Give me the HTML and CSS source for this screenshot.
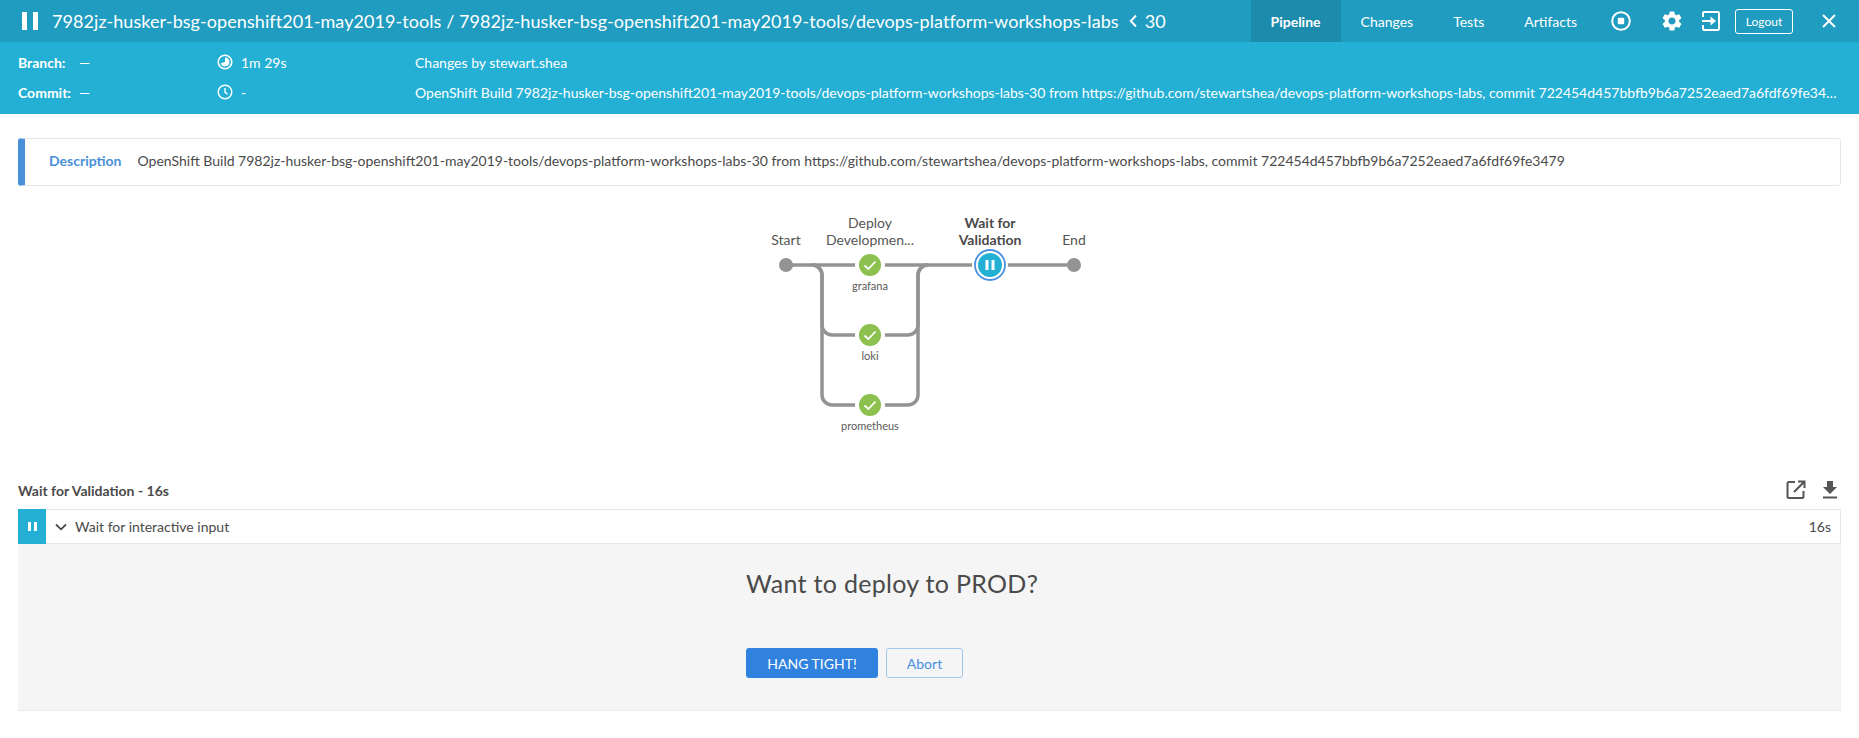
FILE: index.html
```html
<!DOCTYPE html>
<html lang="en">
<head>
  <meta charset="UTF-8">
  <meta name="viewport" content="width=device-width, initial-scale=1">
  <title>Pipeline run</title>
  <link rel="stylesheet" href="styles.css">
</head>
<body>
  <header class="run-header">
    <div class="top-bar">
      <svg class="run-status" width="16" height="18" viewBox="0 0 16 18"><rect width="5" height="18" fill="#fff"/><rect x="11" width="5" height="18" fill="#fff"/></svg>
      <h1 class="run-title">7982jz-husker-bsg-openshift201-may2019-tools / 7982jz-husker-bsg-openshift201-may2019-tools/devops-platform-workshops-labs</h1>
      <svg class="title-chevron" width="8" height="14" viewBox="0 0 8 14"><path d="M7 1.500 1.800 7 7 12.500" fill="none" stroke="#fff" stroke-width="2"/></svg>
      <span class="run-number">30</span>
      <nav class="tabs">
        <a class="tab active">Pipeline</a>
        <a class="tab">Changes</a>
        <a class="tab">Tests</a>
        <a class="tab">Artifacts</a>
      </nav>
      <div class="top-actions">
        <svg class="stop-icon" width="20" height="20" viewBox="0 0 20 20"><circle cx="10" cy="10" r="8.800" fill="none" stroke="#fff" stroke-width="2"/><rect x="6.800" y="6.800" width="6.400" height="6.400" rx="1" fill="#fff"/></svg>
        <svg class="gear-icon" width="24" height="24" viewBox="0 0 24 24"><path fill="#fff" d="M19.140 12.940c.04-.3.06-.61.06-.94 0-.32-.02-.64-.07-.94l2.030-1.580a.49.49 0 0 0 .12-.61l-1.920-3.320a.488.488 0 0 0-.59-.22l-2.390.96c-.5-.38-1.030-.7-1.620-.94l-.36-2.540a.484.484 0 0 0-.48-.41h-3.840c-.24 0-.43.17-.47.41l-.36 2.540c-.59.24-1.130.57-1.620.94l-2.390-.96c-.22-.08-.47 0-.59.22L2.740 8.870c-.12.21-.08.47.12.61l2.030 1.580c-.05.3-.09.63-.09.94s.02.64.07.94l-2.030 1.580a.49.49 0 0 0-.12.61l1.920 3.320c.12.22.37.29.59.22l2.390-.96c.5.38 1.030.7 1.620.94l.36 2.540c.05.24.24.41.48.41h3.840c.24 0 .44-.17.47-.41l.36-2.540c.59-.24 1.130-.56 1.620-.94l2.390.96c.22.08.47 0 .59-.22l1.920-3.320c.12-.22.07-.47-.12-.61l-2.010-1.580zM12 15.600c-1.980 0-3.600-1.620-3.600-3.600s1.620-3.600 3.600-3.600 3.600 1.620 3.600 3.600-1.620 3.600-3.600 3.600z"/></svg>
        <svg class="signin-icon" width="18" height="20" viewBox="0 0 18 20"><path d="M1 6V2.200C1 1.500 1.500 1 2.200 1h13.600c.7 0 1.200.5 1.200 1.200v15.600c0 .7-.5 1.200-1.200 1.200H2.200C1.500 19 1 18.500 1 17.800V14" fill="none" stroke="#fff" stroke-width="2"/><path d="M0 9h8.500V5.500L14 10l-5.500 4.500V11H0z" fill="#fff"/></svg>
        <a class="logout">Logout</a>
        <svg class="close-icon" width="14" height="14" viewBox="0 0 14 14"><path d="M1 1l12 12M13 1 1 13" stroke="#fff" stroke-width="2" fill="none"/></svg>
      </div>
    </div>
    <div class="meta">
      <div class="meta-row">
        <div class="meta-ref"><b>Branch:</b><span>—</span></div>
        <div class="meta-time">
          <svg width="16" height="16" viewBox="0 0 16 16"><circle cx="8" cy="8" r="6.800" fill="none" stroke="#fff" stroke-width="1.600"/><path d="M8 3.600a4.400 4.400 0 1 1-4.200 5.700L8 8z" fill="#fff"/></svg>
          <span>1m 29s</span>
        </div>
        <div class="meta-text">Changes by stewart.shea</div>
      </div>
      <div class="meta-row">
        <div class="meta-ref"><b>Commit:</b><span>—</span></div>
        <div class="meta-time">
          <svg width="16" height="16" viewBox="0 0 16 16"><circle cx="8" cy="8" r="6.800" fill="none" stroke="#fff" stroke-width="1.400"/><path d="M8 4v4.300l2.600 2" fill="none" stroke="#fff" stroke-width="1.400"/></svg>
          <span>-</span>
        </div>
        <div class="meta-text">OpenShift Build 7982jz-husker-bsg-openshift201-may2019-tools/devops-platform-workshops-labs-30 from https://github.com/stewartshea/devops-platform-workshops-labs, commit 722454d457bbfb9b6a7252eaed7a6fdf69fe3479</div>
      </div>
    </div>
  </header>

  <main class="content">
    <div class="description">
      <b>Description</b>
      <span>OpenShift Build 7982jz-husker-bsg-openshift201-may2019-tools/devops-platform-workshops-labs-30 from https://github.com/stewartshea/devops-platform-workshops-labs, commit 722454d457bbfb9b6a7252eaed7a6fdf69fe3479</span>
    </div>

    <div class="graph">
      <svg width="359" height="240" viewBox="0 0 359 240">
        <g fill="none" stroke="#949393" stroke-width="3.500">
          <path d="M36 65H324"/>
          <path d="M62 65a10 10 0 0 1 10 10V125a10 10 0 0 0 10 10H158a10 10 0 0 0 10-10V75a10 10 0 0 1 10-10"/>
          <path d="M62 65a10 10 0 0 1 10 10V195a10 10 0 0 0 10 10H158a10 10 0 0 0 10-10V75a10 10 0 0 1 10-10"/>
        </g>
        <circle cx="36" cy="65" r="7" fill="#949393"/>
        <circle cx="324" cy="65" r="7" fill="#949393"/>

        <g class="ok-node"><circle cx="120" cy="65" r="15" fill="#fff"/><circle cx="120" cy="65" r="11" fill="#8cc04f"/><path d="M114.500 65.500l3.800 3.500 7.200-7.500" fill="none" stroke="#fff" stroke-width="1.800"/></g>
        <g class="ok-node"><circle cx="120" cy="135" r="15" fill="#fff"/><circle cx="120" cy="135" r="11" fill="#8cc04f"/><path d="M114.500 135.500l3.800 3.500 7.200-7.500" fill="none" stroke="#fff" stroke-width="1.800"/></g>
        <g class="ok-node"><circle cx="120" cy="205" r="15" fill="#fff"/><circle cx="120" cy="205" r="11" fill="#8cc04f"/><path d="M114.500 205.500l3.800 3.500 7.200-7.500" fill="none" stroke="#fff" stroke-width="1.800"/></g>

        <circle cx="240" cy="65" r="18" fill="#fff"/>
        <circle cx="240" cy="65" r="15" fill="#fff" stroke="#4a90e2" stroke-width="1.800"/>
        <circle cx="240" cy="65" r="12" fill="#24b0d5"/>
        <rect x="235.500" y="60" width="3" height="10" fill="#fff"/>
        <rect x="241.500" y="60" width="3" height="10" fill="#fff"/>

        <text class="stage" x="36" y="45">Start</text>
        <text class="stage" x="120" y="28">Deploy</text>
        <text class="stage" x="120" y="45">Developmen...</text>
        <text class="stage current" x="240" y="28">Wait for</text>
        <text class="stage current" x="240" y="45">Validation</text>
        <text class="stage" x="324" y="45">End</text>
        <text class="branch" x="120" y="90">grafana</text>
        <text class="branch" x="120" y="160">loki</text>
        <text class="branch" x="120" y="230">prometheus</text>
      </svg>
    </div>

    <div class="step-head">
      <h2>Wait for Validation - 16s</h2>
      <div class="step-tools">
        <svg width="20" height="20" viewBox="0 0 20 20"><path d="M9 2H3C2 2 1.500 2.500 1.500 3.500v13c0 1 .5 1.500 1.500 1.500h13c1 0 1.500-.5 1.500-1.500V11" fill="none" stroke="#555" stroke-width="2"/><path d="M12 1.500h6.500V8M18 2 8 12" fill="none" stroke="#555" stroke-width="2"/></svg>
        <svg width="14" height="18" viewBox="0 0 14 18"><path d="M4 0h6v6h4l-7 7-7-7h4zM0 15.500h14V17.500H0z" fill="#555"/></svg>
      </div>
    </div>

    <div class="step-row">
      <div class="step-state"><i></i><i></i></div>
      <svg class="step-chevron" width="12" height="8" viewBox="0 0 12 8"><path d="M1 1.500 6 6.300l5-4.800" fill="none" stroke="#4a4a4a" stroke-width="1.800"/></svg>
      <span class="step-name">Wait for interactive input</span>
      <span class="step-time">16s</span>
    </div>

    <div class="input-panel">
      <form class="input-form">
        <h3>Want to deploy to PROD?</h3>
        <div class="input-actions">
          <button type="button" class="btn primary">HANG TIGHT!</button>
          <button type="button" class="btn secondary">Abort</button>
        </div>
      </form>
    </div>
  </main>
</body>
</html>
```

FILE: styles.css
```css
* { box-sizing: border-box; }
body { margin: 0; font-family: Lato, "Open Sans", sans-serif; font-size: 14px; color: #4a4a4a; background: #fff; overflow: hidden; }

.run-header { background: #24b0d5; color: #fff; }
.top-bar { display: flex; align-items: center; height: 42px; padding-left: 22px; background: #1f9cbf; }
.run-status { flex: none; margin-right: 14px; }
.run-title { margin: 0; font-size: 18px; font-weight: 400; letter-spacing: .07px; white-space: nowrap; }
.title-chevron { flex: none; margin-left: 10px; }
.run-number { margin-left: 8px; font-size: 18px; }
.tabs { display: flex; height: 42px; margin-left: auto; }
.tab { display: flex; align-items: center; padding: 0 20px; }
.tab.active { background: #1d8bab; font-weight: 700; }
.top-actions { display: flex; align-items: center; width: 262px; padding-left: 14px; }
.stop-icon { flex: none; }
.gear-icon { flex: none; margin-left: 29px; }
.signin-icon { flex: none; margin-left: 18px; }
.logout { display: flex; align-items: center; justify-content: center; width: 58px; height: 25px; margin-left: 15px; border: 1px solid #fff; border-radius: 3px; font-size: 12px; }
.close-icon { flex: none; margin-left: 29px; }

.meta { height: 72px; padding: 5px 21px 7px 18px; }
.meta-row { display: flex; align-items: center; height: 30px; }
.meta-ref { display: flex; flex: none; width: 199px; }
.meta-ref b { width: 61px; font-weight: 700; }
.meta-time { display: flex; flex: none; align-items: center; width: 198px; }
.meta-time span { margin-left: 8px; }
.meta-text { flex: 1; min-width: 0; overflow: hidden; white-space: nowrap; text-overflow: ellipsis; }

.content { padding: 24px 18px 0; }
.description { display: flex; align-items: center; height: 48px; padding: 0 0 4px 24px; border: 1px solid #e8e8e8; border-left: 7px solid #4a90d9; border-radius: 3px; }
.description b { margin-right: 16px; color: #4a90d9; }

.graph { display: flex; justify-content: center; height: 240px; margin: 14px 0 0; }
.stage { font-size: 14px; fill: #555; text-anchor: middle; }
.stage.current { font-weight: 700; fill: #4a4a4a; }
.branch { font-size: 11px; fill: #5a5a5a; text-anchor: middle; }

.step-head { display: flex; align-items: center; justify-content: space-between; height: 33px; margin-top: 36px; padding: 0 4px 5px 0; }
.step-head h2 { margin: 0; font-size: 14px; font-weight: 700; }
.step-tools { display: flex; align-items: center; gap: 17px; }

.step-row { display: flex; align-items: center; height: 35px; padding-right: 9px; border: 1px solid #e8e8e8; border-left: 0; }
.step-state { display: flex; align-items: center; justify-content: center; gap: 3px; align-self: stretch; width: 28px; margin: -1px 0; background: #24b0d5; }
.step-state i { width: 3px; height: 9px; background: #fff; }
.step-chevron { flex: none; margin-left: 9px; }
.step-name { margin-left: 8px; }
.step-time { margin-left: auto; }

.input-panel { display: flex; justify-content: center; height: 167px; background: #f5f5f5; border-bottom: 1px solid #eaeaea; }
.input-form { width: 367px; }
.input-form h3 { margin: 23px 0 0; font-size: 25px; line-height: 32px; font-weight: 400; letter-spacing: .3px; }
.input-actions { display: flex; gap: 8px; margin-top: 49px; }
.btn { height: 30px; border-radius: 3px; font-family: inherit; font-size: 14px; }
.btn.primary { width: 132px; border: 0; background: #3182de; color: #fff; }
.btn.secondary { width: 77px; border: 1px solid #a4c7ef; background: transparent; color: #4a90e2; }
```
